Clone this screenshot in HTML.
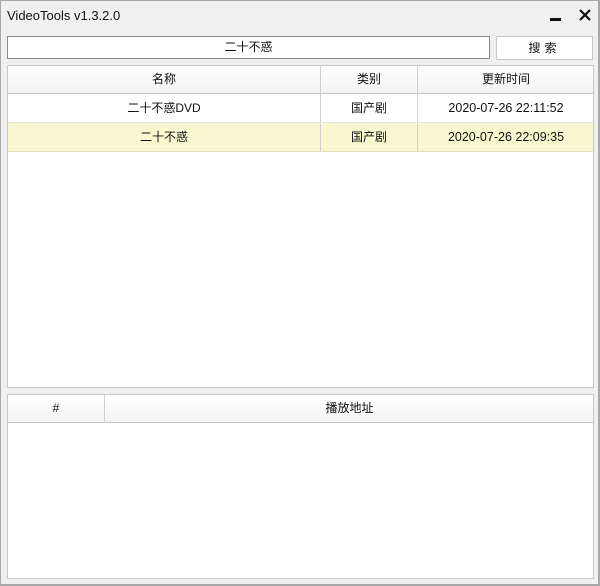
<!DOCTYPE html>
<html><head><meta charset="utf-8"><style>
*{margin:0;padding:0;box-sizing:border-box}
body{width:600px;height:586px;overflow:hidden;background:#f0f0f0;font-family:"Liberation Sans","Noto Sans CJK SC",sans-serif;font-size:12px;color:#111}
.win{position:absolute;left:0;top:0;width:600px;height:586px;border:1px solid #a8a8a8;border-right:2px solid #a8a8a8;border-bottom:2px solid #a8a8a8}
.abs{position:absolute}
.title{left:7px;top:8px;font-size:13px}
.input{left:7px;top:36px;width:483px;height:23px;border:1px solid #8a8a8a;background:#fff;text-align:center;line-height:21px}
.btn{left:496px;top:36px;width:97px;height:24px;border:1px solid #c8c8c8;background:#fff;text-align:center;line-height:22px;letter-spacing:4px}
.tbl{left:7px;border:1px solid #c8c8c8;background:#fff;width:587px}
.hdr{position:absolute;left:0;top:0;right:0;height:28px;background:linear-gradient(#fff,#f3f3f3);border-bottom:1px solid #c8c8c8}
.cell{position:absolute;text-align:center;height:100%;border-right:1px solid #d0d0d0}
.row{position:absolute;left:0;right:0;height:29px;line-height:29px}
.hdr .cell{line-height:27px}
.d{font-size:12.5px}
</style></head><body><div class="win"></div>
<div class="abs title">VideoTools v1.3.2.0</div>
<div class="abs" style="left:550px;top:18px;width:11px;height:3px;background:#111"></div>
<svg class="abs" style="left:578px;top:8px" width="14" height="14"><path d="M2 2L12 12M12 2L2 12" stroke="#111" stroke-width="2.2"/></svg>
<div class="abs input">二十不惑</div>
<div class="abs btn">搜索</div>
<div class="abs tbl" style="top:65px;height:323px">
<div class="hdr"><div class="cell" style="left:0;width:313px">名称</div><div class="cell" style="left:313px;width:97px">类别</div><div class="cell" style="left:410px;width:176px;border:none">更新时间</div></div>
<div class="row" style="top:28px;border-bottom:1px solid #e4e4e4"><div class="cell" style="left:0;width:313px">二十不惑DVD</div><div class="cell" style="left:313px;width:97px">国产剧</div><div class="cell d" style="left:410px;width:176px;border:none">2020-07-26 22:11:52</div></div>
<div class="row" style="top:57px;background:#f8f8d0;border-bottom:1px solid #e0e0c0"><div class="cell" style="left:0;width:313px">二十不惑</div><div class="cell" style="left:313px;width:97px">国产剧</div><div class="cell d" style="left:410px;width:176px;border:none">2020-07-26 22:09:35</div></div>
</div>
<div class="abs tbl" style="top:394px;height:185px">
<div class="hdr"><div class="cell" style="left:0;width:97px">#</div><div class="cell" style="left:97px;width:489px;border:none">播放地址</div></div>
</div>
</body></html>
